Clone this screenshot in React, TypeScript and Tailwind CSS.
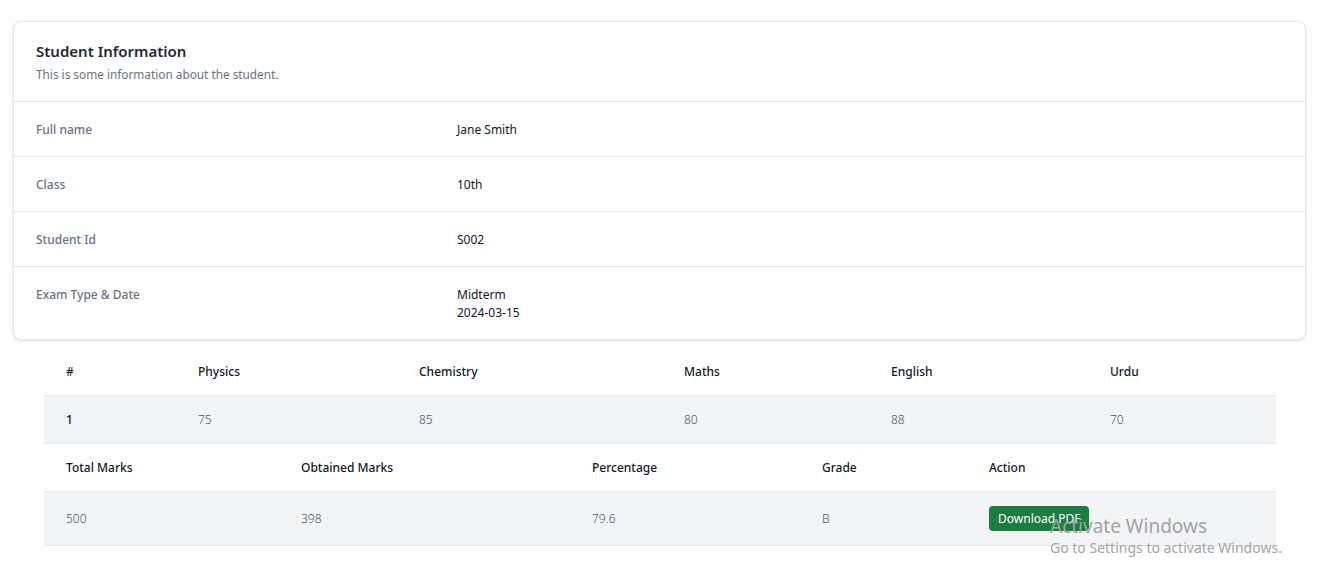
import React from "react";

const font = { fontFamily: '"Noto Sans", "Open Sans", sans-serif' };

const info: { label: string; value: React.ReactNode }[] = [
  { label: "Full name", value: "Jane Smith" },
  { label: "Class", value: "10th" },
  { label: "Student Id", value: "S002" },
  {
    label: "Exam Type & Date",
    value: (
      <>
        <div>Midterm</div>
        <div>2024-03-15</div>
      </>
    ),
  },
];

export default function App() {
  return (
    <div className="relative min-h-[577px] bg-white pl-[13px] pr-[22px] pt-[21px] text-[#111827]" style={font}>
      <div className="overflow-hidden rounded-[8px] border border-[#e5e7eb] bg-white shadow-[0_1px_3px_rgba(0,0,0,0.12)]">
        <div className="border-b border-[#e5e7eb] px-[22px] py-[18px]">
          <h3 className="text-[15px] font-semibold leading-[22px] text-[#1f2937]">Student Information</h3>
          <p className="mt-[3px] text-[11.8px] leading-[18px] text-[#6b7280]">This is some information about the student.</p>
        </div>
        <dl>
          {info.map((row, i) => (
            <div
              key={row.label}
              className={`grid grid-cols-3 gap-4 px-[22px] pb-[17px] pt-[19px] text-[12px] leading-[18px] ${i < info.length - 1 ? "border-b border-[#e5e7eb]" : ""}`}
            >
              <dt className="font-medium text-[#6b7280]">{row.label}</dt>
              <dd className="col-span-2 text-[#111827]">{row.value}</dd>
            </div>
          ))}
        </dl>
      </div>

      <div className="ml-[31px] mr-[30px] mt-2">
        <table className="w-full border-collapse text-left text-[12px] leading-[19px]">
          <thead>
            <tr className="border-b border-[#e5e7eb]">
              <th className="w-[132px] px-[22px] py-[14px] font-medium">#</th>
              <th className="w-[221px] px-[22px] py-[14px] font-medium">Physics</th>
              <th className="w-[265px] px-[22px] py-[14px] font-medium">Chemistry</th>
              <th className="w-[207px] px-[22px] py-[14px] font-medium">Maths</th>
              <th className="w-[219px] px-[22px] py-[14px] font-medium">English</th>
              <th className="px-[22px] py-[14px] font-medium">Urdu</th>
            </tr>
          </thead>
          <tbody>
            <tr className="border-b border-[#e5e7eb] bg-[#f3f4f6]">
              <td className="px-[22px] py-[14px] font-medium">1</td>
              <td className="px-[22px] py-[14px] font-light text-[#4b5563]">75</td>
              <td className="px-[22px] py-[14px] font-light text-[#4b5563]">85</td>
              <td className="px-[22px] py-[14px] font-light text-[#4b5563]">80</td>
              <td className="px-[22px] py-[14px] font-light text-[#4b5563]">88</td>
              <td className="px-[22px] py-[14px] font-light text-[#4b5563]">70</td>
            </tr>
          </tbody>
        </table>
        <table className="w-full border-collapse text-left text-[12px] leading-[19px]">
          <thead>
            <tr className="border-b border-[#e5e7eb]">
              <th className="w-[235px] px-[22px] py-[14px] font-medium">Total Marks</th>
              <th className="w-[291px] px-[22px] py-[14px] font-medium">Obtained Marks</th>
              <th className="w-[230px] px-[22px] py-[14px] font-medium">Percentage</th>
              <th className="w-[167px] px-[22px] py-[14px] font-medium">Grade</th>
              <th className="px-[22px] py-[14px] font-medium">Action</th>
            </tr>
          </thead>
          <tbody>
            <tr className="border-b border-[#e5e7eb] bg-[#f3f4f6]">
              <td className="px-[22px] py-[14px] font-light text-[#4b5563]">500</td>
              <td className="px-[22px] py-[14px] font-light text-[#4b5563]">398</td>
              <td className="px-[22px] py-[14px] font-light text-[#4b5563]">79.6</td>
              <td className="px-[22px] py-[14px] font-light text-[#4b5563]">B</td>
              <td className="px-[22px] py-[14px]">
                <button className="block h-[25px] rounded-[4px] bg-[#1a7f3e] px-[9px] text-[12px] leading-[25px] text-white">
                  Download PDF
                </button>
              </td>
            </tr>
          </tbody>
        </table>
      </div>

      <div className="pointer-events-none absolute left-[1050px] top-[513px] text-[#a3a3a3]">
        <div className="text-[19px] leading-[26px]">Activate Windows</div>
        <div className="text-[14px] leading-[18px]">Go to Settings to activate Windows.</div>
      </div>
    </div>
  );
}
